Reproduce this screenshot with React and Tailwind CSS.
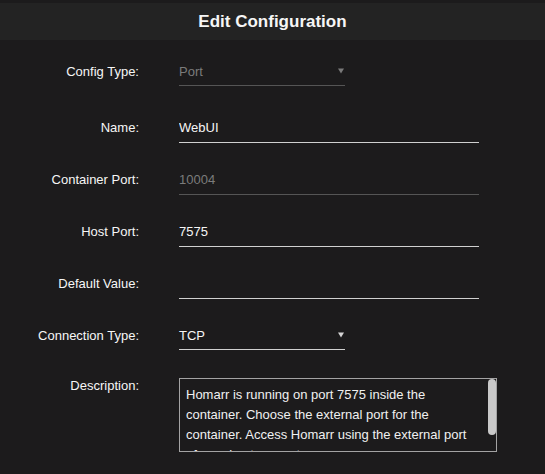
import React from "react";

const font = { fontFamily: '"Liberation Sans", Arial, sans-serif' };

function Caret({ light }) {
  return (
    <svg width="6" height="6" viewBox="0 0 6 6" className="mb-[1px]">
      <polygon points="0,0.5 6,0.5 3,5.5" fill={light ? "#d4d4d4" : "#7a7a7a"} />
    </svg>
  );
}

function Label({ children, pb }) {
  return (
    <div
      className={`w-[139px] shrink-0 h-[26px] flex items-center justify-end text-[13px] text-[#f6f6f6] ${pb}`}
    >
      {children}
    </div>
  );
}

function SelectRow({ label, value, disabled, className }) {
  return (
    <div className={`flex gap-[40px] ${className}`}>
      <Label pb="pb-[2px]">{label}</Label>
      <div
        className={`w-[166px] h-[26px] pb-[2px] border-b flex items-center justify-between pr-[1px] text-[13px] ${
          disabled
            ? "border-[#555555] text-[#7b7b7b]"
            : "border-[#d0d0d0] text-[#f6f6f6]"
        }`}
      >
        <span>{value}</span>
        <Caret light={!disabled} />
      </div>
    </div>
  );
}

function InputRow({ label, value, disabled, className }) {
  return (
    <div className={`flex gap-[40px] ${className}`}>
      <Label pb="pb-[4px]">{label}</Label>
      <input
        readOnly
        value={value}
        className={`w-[300px] h-[26px] pb-[4px] border-b bg-transparent outline-none text-[13px] ${
          disabled
            ? "border-[#555555] text-[#7b7b7b]"
            : "border-[#d0d0d0] text-[#f6f6f6]"
        }`}
        style={font}
      />
    </div>
  );
}

export default function App() {
  const description =
    "Homarr is running on port 7575 inside the container. Choose the external port for the container. Access Homarr using the external port of your host computer.";

  return (
    <div className="min-h-screen bg-[#1c1b1c] pt-[3px]" style={font}>
      {/* Title bar */}
      <div className="h-[37px] bg-[#232323] flex items-center justify-center">
        <h2 className="text-[17px] font-bold text-[#f6f6f6]">Edit Configuration</h2>
      </div>

      {/* Form */}
      <div className="flex flex-col pt-[20px]">
        <SelectRow label="Config Type:" value="Port" disabled />
        <InputRow label="Name:" value="WebUI" className="mt-[31px]" />
        <InputRow label="Container Port:" value="10004" disabled className="mt-[26px]" />
        <InputRow label="Host Port:" value="7575" className="mt-[26px]" />
        <InputRow label="Default Value:" value="" className="mt-[26px]" />
        <SelectRow label="Connection Type:" value="TCP" className="mt-[25px]" />

        <div className="flex gap-[40px] mt-[28px]">
          <div className="w-[139px] shrink-0 text-right text-[13px] leading-[16px] text-[#f6f6f6]">
            Description:
          </div>
          <div className="relative w-[318px] h-[74px]">
            <textarea
              readOnly
              value={description}
              className="w-full h-full border border-[#a3a3a3] bg-transparent outline-none resize-none overflow-hidden pl-[6px] pt-[6px] pr-[20px] pb-[8px] text-[13px] leading-[20px] text-[#f0f0f0]"
              style={font}
            />
            {/* scrollbar thumb */}
            <div className="absolute right-[1px] top-[1px] w-[8px] h-[56px] rounded-[4px] bg-[#c9c9c9]" />
          </div>
        </div>
      </div>
    </div>
  );
}
